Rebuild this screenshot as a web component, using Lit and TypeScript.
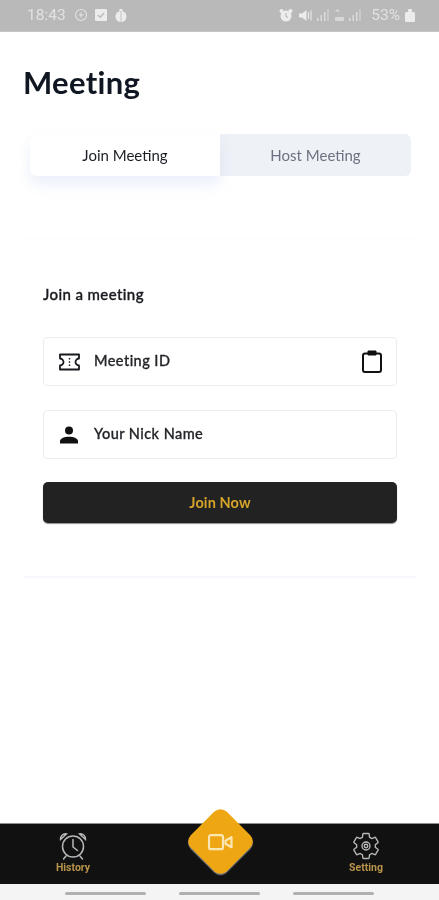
import { LitElement, html, css, svg } from "lit";
import { customElement } from "lit/decorators.js";

@customElement("app-root")
export class AppRoot extends LitElement {
  static styles = css`
    :host { display: block; width: 439px; height: 900px; font-family: "Lato", "Noto Sans", sans-serif; background: #fff; color: #14181f; overflow: hidden; }
    .page { display: flex; flex-direction: column; height: 900px; position: relative; filter: blur(0.35px); }
    .status { height: 32px; flex: none; box-sizing: border-box; background: #b9b9b9; border-bottom: 1px solid #c6c6c6; display: flex; align-items: center; justify-content: space-between; padding: 0 24px 1px 27px; color: #e2e2e2; font-size: 15.5px; font-family: "Roboto", sans-serif; }
    .status > div { display: flex; align-items: center; filter: blur(0.4px); }
    .st-left { gap: 7px; }
    .st-right { gap: 3px; }
    .status svg { display: block; }
    .ml1 { margin-left: 1px; }
    .ml2 { margin-left: 2px; }
    .pct { margin-left: 6px; }
    .main { flex: 1; display: flex; flex-direction: column; min-height: 0; }
    h1 { margin: 0; padding: 32px 0 0 23px; font-size: 31px; line-height: 36px; font-weight: 700; letter-spacing: 0.3px; color: #101722; }
    .tabs { margin: 34px 28px 0 30px; display: grid; grid-template-columns: 190px 1fr; height: 42px; background: #eef1f6; border-radius: 6px; font-size: 15px; }
    .tab { display: flex; align-items: center; justify-content: center; }
    .tab.on { background: #fff; color: #1b1e24; border-radius: 6px 0 0 6px; box-shadow: 0 8px 14px rgba(170, 180, 235, 0.22); }
    .tab.off { color: #6d7280; }
    .card { margin: 62px 23px 0 24px; height: 340px; box-sizing: border-box; padding: 45px 19px 0 19px; background: #fff; border-top: 1px solid #fafbfd; border-bottom: 2px solid #f7f8fe; display: flex; flex-direction: column; }
    .card-h { font-size: 15px; line-height: 20px; font-weight: 500; -webkit-text-stroke: 0.35px #1a1c20; color: #1a1c20; letter-spacing: 0.4px; }
    .field { height: 49px; box-sizing: border-box; border: 1px solid #ececec; border-radius: 4px; display: flex; align-items: center; padding: 0 14px; font-size: 14.5px; font-weight: 500; -webkit-text-stroke: 0.3px #24262a; color: #24262a; letter-spacing: 0.45px; gap: 13px; }
    .field span { flex: 1; padding-bottom: 2px; }
    .first { margin-top: 33px; }
    .second { margin-top: 24px; }
    .btn { margin-top: 23px; height: 41px; border-radius: 5px; background: #222222; color: #d7a42b; display: flex; align-items: center; justify-content: center; font-size: 14.5px; font-weight: 700; letter-spacing: 0.1px; box-shadow: 0 1px 1px rgba(0,0,0,.45); }
    .nav { height: 61px; flex: none; background: #111111; border-top: 1px solid #8f8f8f; box-sizing: border-box; display: grid; grid-template-columns: 146px 1fr 146px; }
    .nav-item { display: flex; flex-direction: column; align-items: center; color: #b8934a; font-size: 10.5px; font-weight: 700; font-family: "Roboto", sans-serif; padding-top: 7px; line-height: 12px; gap: 1px; }
    .fab { position: absolute; left: 195px; top: 816px; width: 51px; height: 51px; transform: rotate(45deg); background: #eea712; border-radius: 9px; box-shadow: 1px 1px 1px rgba(120, 130, 150, .9); display: flex; align-items: center; justify-content: center; }
    .fab svg { transform: rotate(-45deg); }
    .home { height: 16px; flex: none; background: #f4f4f4; display: grid; grid-template-columns: 81px 81px 81px; column-gap: 33px; justify-content: center; align-items: center; padding-top: 2px; box-sizing: border-box; }
    .home i { display: block; height: 3px; border-radius: 2px; background: #b0b0b0; }
  `;

  private statusLeft() {
    return html`<div class="st-left"><span>18:43</span>
      <svg class="ml1" width="14" height="14" viewBox="0 0 14 14" fill="none" stroke="#e2e2e2" stroke-width="1.100"><circle cx="7" cy="7" r="5.500"/><path d="M7 4.500v5M4.500 7h5"/></svg>
      <svg width="12" height="12" viewBox="0 0 12 12"><rect width="12" height="12" rx="1" fill="#ececec"/><path d="M3 6l2.200 2.200L9 4" stroke="#b9b9b9" stroke-width="1.300" fill="none"/></svg>
      <svg class="ml1" width="12" height="13" viewBox="0 0 12 13" fill="#ececec"><ellipse cx="6" cy="7.500" rx="5.500" ry="5.500"/><rect x="4.500" y="0" width="3" height="3"/><path d="M6 2v11" stroke="#b9b9b9" stroke-width=".8"/></svg>
    </div>`;
  }

  private bars() {
    return svg`<svg width="14" height="12" viewBox="0 0 14 12" fill="#dcdcdc"><rect x="1" y="9" width="1.500" height="3"/><rect x="4.500" y="6" width="1.500" height="6"/><rect x="8" y="3" width="1.500" height="9"/><rect x="11.500" y="0" width="1" height="12"/></svg>`;
  }

  private statusRight() {
    return html`<div class="st-right">
      <svg width="14" height="13" viewBox="0 0 14 13" fill="#ececec"><circle cx="7" cy="7" r="5.500"/><circle cx="2.500" cy="2" r="2"/><circle cx="11.500" cy="2" r="2"/><path d="M7 4v3.400l2 1" stroke="#b9b9b9" stroke-width="1.100" fill="none"/></svg>
      <svg class="ml2" width="15" height="13" viewBox="0 0 15 13" fill="#ececec"><path d="M1 4.500h3L8.500 1v11L4 8.500H1z"/><path d="M10.500 3v7M13 1.500v10" stroke="#ececec" stroke-width="1.100"/></svg>
      ${this.bars()}
      <svg class="ml2" width="9" height="12" viewBox="0 0 9 12" fill="#d8d8d8"><path d="M2.500 0v6M0 2.500L2.500 0 5 2.500M6.500 6V0"/><rect y="8" width="9" height="4" rx="1"/></svg>
      <span class="ml1">${this.bars()}</span>
      <span class="pct">53%</span>
      <svg class="ml2" width="10" height="13" viewBox="0 0 10 13" fill="#ececec"><rect x="3" y="0" width="4" height="3" rx="1"/><rect x="0" y="3" width="10" height="10" rx="1.500"/></svg>
    </div>`;
  }

  render() {
    return html`<div class="page">
      <div class="status">${this.statusLeft()}${this.statusRight()}</div>
      <div class="main">
        <h1>Meeting</h1>
        <div class="tabs"><div class="tab on">Join Meeting</div><div class="tab off">Host Meeting</div></div>
        <div class="card">
          <div class="card-h">Join a meeting</div>
          <div class="field first">
            <svg width="23" height="18" viewBox="0 0 23 18" fill="none" stroke="#17191d" stroke-width="1.800" stroke-linejoin="round"><path d="M2 1.500h19v4a3.500 3.500 0 0 0 0 7v4H2v-4a3.500 3.500 0 0 0 0-7z"/><path d="M11.500 5v1.500M11.500 8.200v1.600M11.500 11.500V13" stroke-width="1.400"/></svg>
            <span>Meeting ID</span>
            <svg width="20" height="23" viewBox="0 0 20 23" fill="none" stroke="#111" stroke-width="2"><rect x="1" y="3.500" width="18" height="18.500" rx="2"/><path d="M6 1h8v4H6z" fill="#111" stroke-width="1"/></svg>
          </div>
          <div class="field second">
            <svg width="23" height="18" viewBox="0 0 23 18" fill="#111"><circle cx="11" cy="4.500" r="4"/><path d="M2 17.500v-2.500c0-2.800 5-4.300 9-4.300s9 1.500 9 4.300v2.500z"/></svg>
            <span>Your Nick Name</span>
          </div>
          <div class="btn">Join Now</div>
        </div>
      </div>
      <div class="nav">
        <div class="nav-item">
          <svg width="30" height="30" viewBox="0 0 30 30" fill="none" stroke="#b8b8b8" stroke-width="1.500" stroke-linecap="round"><circle cx="15" cy="15.500" r="10.500"/><path d="M15 8.500v7.500l4.500 3.500"/><path d="M2.500 8.500a5 5 0 0 1 6-5.500zM27.500 8.500a5 5 0 0 0-6-5.500zM8 25l-2.500 3M22 25l2.500 3"/></svg>
          <span>History</span>
        </div>
        <div></div>
        <div class="nav-item">
          <svg width="30" height="30" viewBox="0 0 24 24" fill="none" stroke="#b8b8b8" stroke-width="1.100" stroke-linejoin="round"><circle cx="12" cy="12" r="3.200"/><circle cx="12" cy="12" r="1.400"/><path d="M19.430 12.980c.04-.32.070-.64.070-.98s-.03-.66-.07-.98l2.110-1.650c.19-.15.240-.42.120-.64l-2-3.460c-.12-.22-.39-.3-.61-.22l-2.490 1c-.52-.4-1.080-.73-1.690-.98l-.38-2.650A.488.488 0 0 0 14 2h-4c-.25 0-.46.180-.49.420l-.38 2.650c-.61.250-1.170.590-1.690.980l-2.490-1c-.23-.09-.49 0-.61.220l-2 3.460c-.13.220-.07.490.12.640l2.110 1.650c-.04.320-.07.650-.07.980s.03.660.07.980l-2.110 1.650c-.19.150-.24.420-.12.640l2 3.460c.12.220.39.300.61.220l2.490-1c.52.400 1.080.730 1.690.980l.38 2.650c.03.240.24.420.49.420h4c.25 0 .46-.180.49-.420l.38-2.650c.61-.250 1.170-.590 1.690-.980l2.490 1c.23.090.49 0 .61-.220l2-3.460c.12-.220.07-.490-.12-.640l-2.110-1.650z"/></svg>
          <span>Setting</span>
        </div>
      </div>
      <div class="home"><i></i><i></i><i></i></div>
      <div class="fab">
        <svg width="26" height="18" viewBox="0 0 26 18" fill="none" stroke="#fbe6b4" stroke-width="2.200" stroke-linejoin="round"><rect x="1.500" y="2" width="14" height="14" rx="2"/><path d="M18 7.500l6-3.500v10l-6-3.500z"/></svg>
      </div>
    </div>`;
  }
}
